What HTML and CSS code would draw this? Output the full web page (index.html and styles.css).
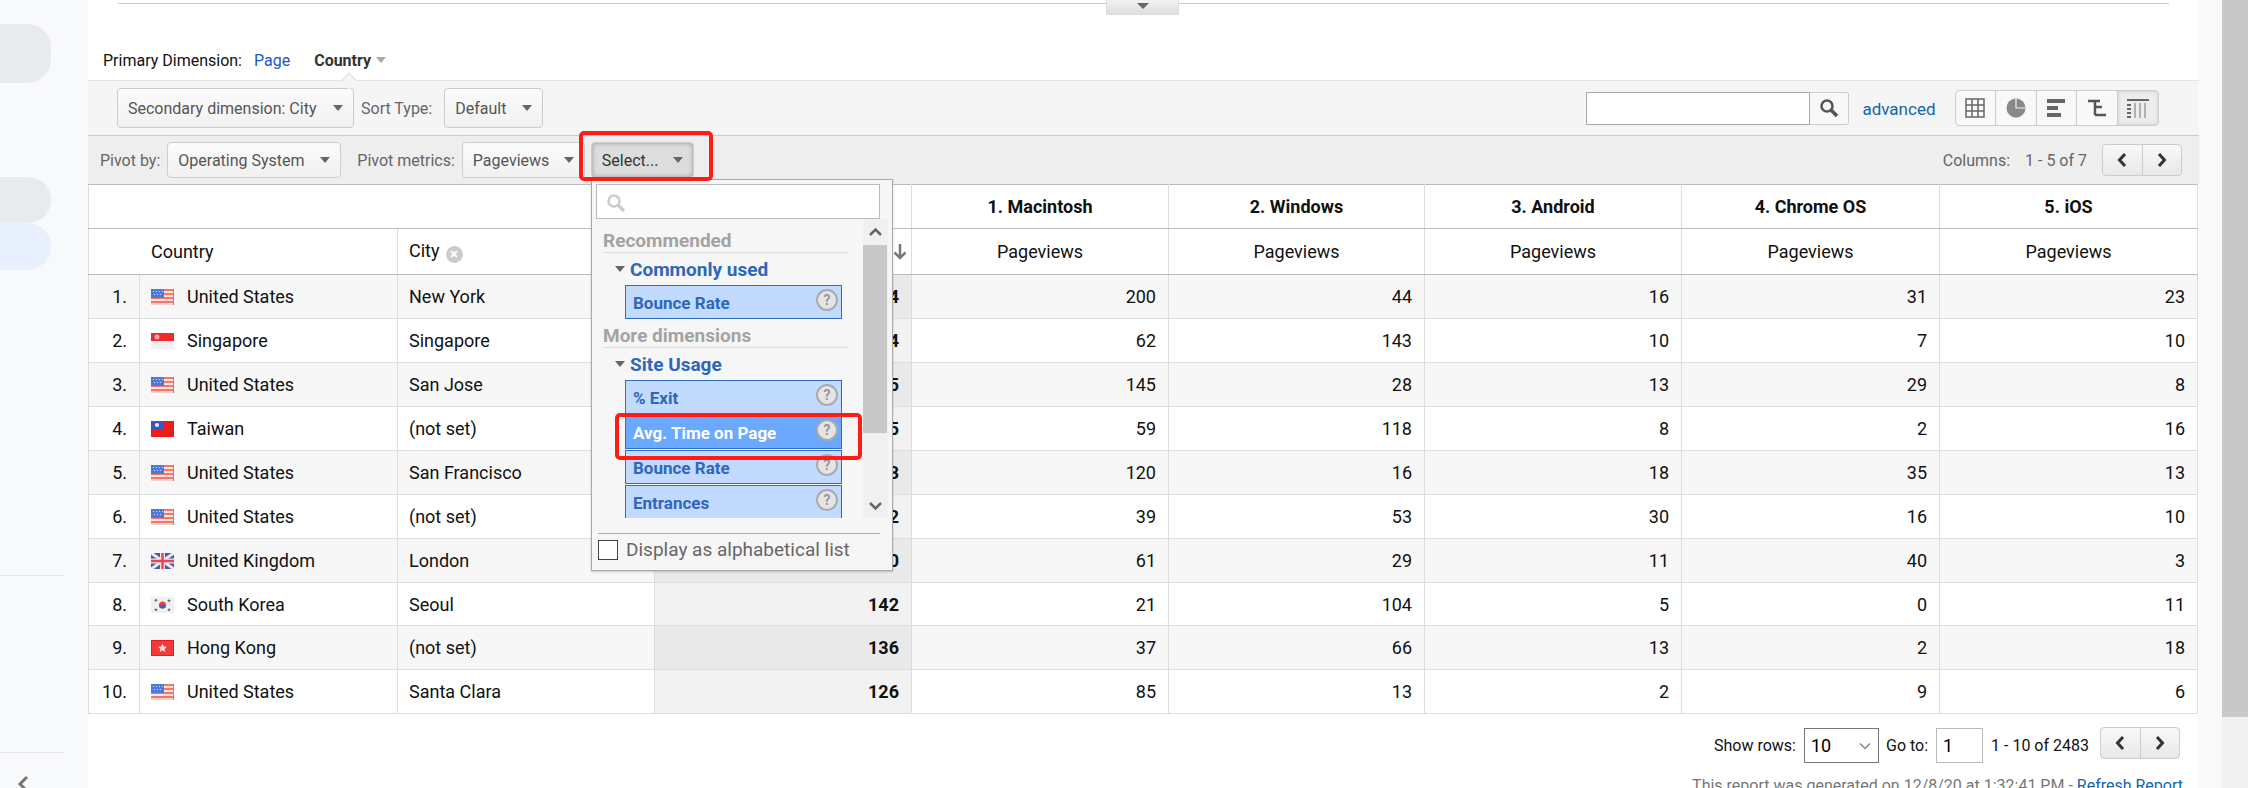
FILE: index.html
```html
<!DOCTYPE html>
<html lang="en">
<head>
  <meta charset="UTF-8" />
  <title>Pivot table report</title>
  <link rel="stylesheet" href="styles.css">
</head>
<body>
  <svg class="defs" width="0" height="0">
    <defs>
      <symbol id="flag-us" viewBox="0 0 23 16">
        <rect width="23" height="16" fill="#fbe4e0"/>
        <rect y="0" width="23" height="2" fill="#f4776c"/>
        <rect y="4" width="23" height="2" fill="#f4776c"/>
        <rect y="8" width="23" height="2" fill="#f4776c"/>
        <rect y="12" width="23" height="2" fill="#f4776c"/>
        <rect y="14" width="23" height="2" fill="#ecd3cc"/>
        <rect width="13" height="9" fill="#4b7be0"/>
        <path d="M2 2h1v1H2zM5 2h1v1H5zM8 2h1v1H8zM11 2h1v1h-1zM3 5h1v1H3zM6 5h1v1H6zM9 5h1v1H9z" fill="#cfdcff"/>
        <rect x="22" width="1" height="16" fill="#a98a80"/>
      </symbol>
      <symbol id="flag-sg" viewBox="0 0 23 16">
        <rect width="23" height="8" fill="#ee2b2b"/>
        <rect y="8" width="23" height="8" fill="#f3f1f1"/>
        <circle cx="6" cy="4" r="2.500" fill="#f9a5a5"/>
      </symbol>
      <symbol id="flag-tw" viewBox="0 0 23 16">
        <rect width="23" height="16" fill="#ee1b1b"/>
        <rect width="12" height="8" fill="#3a55c8"/>
        <circle cx="6" cy="4" r="2" fill="#eef"/>
      </symbol>
      <symbol id="flag-uk" viewBox="0 0 23 16">
        <rect width="23" height="16" fill="#3f5cb0"/>
        <path d="M0 0L23 16M23 0L0 16" stroke="#f4e4e6" stroke-width="3"/>
        <path d="M11.500 0v16M0 8h23" stroke="#f4e4e6" stroke-width="5"/>
        <path d="M11.500 0v16M0 8h23" stroke="#e8455a" stroke-width="2.500"/>
      </symbol>
      <symbol id="flag-kr" viewBox="0 0 23 16">
        <rect width="23" height="16" fill="#efefef"/>
        <circle cx="11.500" cy="8" r="3.500" fill="#e8404a"/>
        <path d="M8 8a3.500 3.500 0 0 0 7 0z" fill="#3a62c8"/>
        <path d="M4 4l2 -1.500M17 3l2 1.500M4 12l2 1.500M17 13.500l2 -1.500" stroke="#666" stroke-width="2"/>
      </symbol>
      <symbol id="flag-hk" viewBox="0 0 23 16">
        <rect width="23" height="16" fill="#e8191f"/>
        <rect x="1" y="1" width="21" height="14" fill="#f23a3a"/>
        <path d="M11.500 3.500l1.300 3 3.200.3-2.400 2.100.7 3.100-2.800-1.600-2.800 1.600.7-3.100-2.400-2.100 3.200-.3z" fill="#fbd5d5"/>
      </symbol>
      <symbol id="chev-left" viewBox="0 0 12 16">
        <path d="M9 2L3.500 8 9 14" fill="none" stroke="#333" stroke-width="3"/>
      </symbol>
      <symbol id="chev-right" viewBox="0 0 12 16">
        <path d="M3 2l5.500 6L3 14" fill="none" stroke="#333" stroke-width="3"/>
      </symbol>
    </defs>
  </svg>

  <div class="sidebar">
    <div class="pill pill-top"></div>
    <div class="pill pill-gray"></div>
    <div class="pill pill-blue"></div>
    <div class="side-line side-line-a"></div>
    <div class="side-line side-line-b"></div>
    <svg class="side-back" width="14" height="18" viewBox="0 0 14 18"><path d="M11 2L4 9l7 7" fill="none" stroke="#777" stroke-width="3"/></svg>
  </div>

  <div class="main">
    <div class="top-rule"><div class="drag-handle"><span class="caret"></span></div></div>

    <div class="primary-dim">
      <span class="pd-label">Primary Dimension:</span>
      <a class="pd-link">Page</a>
      <span class="pd-active">Country</span>
      <span class="caret caret-light"></span>
    </div>

    <div class="toolbar">
      <span class="notch"></span>
      <button class="btn btn-secondary">Secondary dimension: City<span class="caret"></span></button>
      <span class="tool-label">Sort Type:</span>
      <button class="btn btn-sort">Default<span class="caret"></span></button>
      <div class="tool-right">
        <div class="search-box">
          <input type="text" />
          <button>
            <svg width="20" height="20" viewBox="0 0 20 20"><circle cx="8" cy="8" r="5.500" fill="none" stroke="#555" stroke-width="2.500"/><path d="M12 12l6 6" stroke="#555" stroke-width="3.500"/></svg>
          </button>
        </div>
        <a class="advanced">advanced</a>
        <div class="view-btns">
          <span class="view-btn">
            <svg width="20" height="20" viewBox="0 0 20 20"><path d="M1 1h18v18H1zM7 1v18M13 1v18M1 7h18M1 13h18" fill="none" stroke="#666" stroke-width="1.500"/></svg>
          </span>
          <span class="view-btn">
            <svg width="20" height="20" viewBox="0 0 20 20"><circle cx="10" cy="10" r="9.500" fill="#888"/><path d="M10 1v9h9" fill="none" stroke="#eee" stroke-width="1.200"/></svg>
          </span>
          <span class="view-btn">
            <svg width="20" height="20" viewBox="0 0 20 20"><path d="M1 1h18v4H1zM1 8h11v4H1zM1 15h14v4H1z" fill="#666"/></svg>
          </span>
          <span class="view-btn">
            <svg width="20" height="20" viewBox="0 0 20 20"><path d="M1 3h12M8 3v14M8 9h7M8 17h11" fill="none" stroke="#555" stroke-width="2.500"/></svg>
          </span>
          <span class="view-btn view-btn-on">
            <svg width="24" height="20" viewBox="0 0 24 20"><path d="M1 1h22v2H1zM1 6h4v2H1zM1 10h4v2H1zM1 14h4v2H1zM1 18h4v2H1z" fill="#666"/><path d="M9 5v15M14 5v15M19 5v15" stroke="#888" stroke-width="1.200"/></svg>
          </span>
        </div>
      </div>
    </div>

    <div class="pivotbar">
      <span class="tool-label">Pivot by:</span>
      <button class="btn btn-pivot">Operating System<span class="caret"></span></button>
      <span class="tool-label metrics-label">Pivot metrics:</span>
      <button class="btn btn-metric">Pageviews<span class="caret"></span></button>
      <button class="btn btn-select">Select...<span class="caret"></span></button>
      <div class="pivot-right">
        <span class="columns-label">Columns:</span>
        <span class="columns-range">1 - 5 of 7</span>
        <div class="nav-btns nav-btns-top">
          <span class="nav-btn"><svg width="12" height="16"><use href="#chev-left"/></svg></span>
          <span class="nav-btn"><svg width="12" height="16"><use href="#chev-right"/></svg></span>
        </div>
      </div>
    </div>

    <table class="report">
      <colgroup>
        <col class="c-idx"><col class="c-wide"><col class="c-mid"><col class="c-mid">
        <col class="c-mid"><col class="c-narrow"><col class="c-mid"><col class="c-wide"><col class="c-wide">
      </colgroup>
      <thead>
        <tr class="head-a">
          <th colspan="4"></th>
          <th>1. Macintosh</th>
          <th>2. Windows</th>
          <th>3. Android</th>
          <th>4. Chrome OS</th>
          <th>5. iOS</th>
        </tr>
        <tr class="head-b">
          <td colspan="2" class="country-head">Country</td>
          <td class="city-head">City<span class="remove-dim">×</span></td>
          <td class="sorted-head">Pageviews<svg class="sort-arrow" width="14" height="16" viewBox="0 0 14 16"><path d="M7 0v14M1.500 8.500L7 14l5.500-5.500" fill="none" stroke="#777" stroke-width="2.500"/></svg></td>
          <td>Pageviews</td>
          <td>Pageviews</td>
          <td>Pageviews</td>
          <td>Pageviews</td>
          <td>Pageviews</td>
        </tr>
      </thead>
      <tbody>
        <tr>
          <td class="idx">1.</td>
          <td class="country"><svg class="flag"><use href="#flag-us"/></svg>United States</td>
          <td class="city">New York</td>
          <td class="total">314</td>
          <td>200</td><td>44</td><td>16</td><td>31</td><td>23</td>
        </tr>
        <tr>
          <td class="idx">2.</td>
          <td class="country"><svg class="flag"><use href="#flag-sg"/></svg>Singapore</td>
          <td class="city">Singapore</td>
          <td class="total">234</td>
          <td>62</td><td>143</td><td>10</td><td>7</td><td>10</td>
        </tr>
        <tr>
          <td class="idx">3.</td>
          <td class="country"><svg class="flag"><use href="#flag-us"/></svg>United States</td>
          <td class="city">San Jose</td>
          <td class="total">225</td>
          <td>145</td><td>28</td><td>13</td><td>29</td><td>8</td>
        </tr>
        <tr>
          <td class="idx">4.</td>
          <td class="country"><svg class="flag"><use href="#flag-tw"/></svg>Taiwan</td>
          <td class="city">(not set)</td>
          <td class="total">205</td>
          <td>59</td><td>118</td><td>8</td><td>2</td><td>16</td>
        </tr>
        <tr>
          <td class="idx">5.</td>
          <td class="country"><svg class="flag"><use href="#flag-us"/></svg>United States</td>
          <td class="city">San Francisco</td>
          <td class="total">203</td>
          <td>120</td><td>16</td><td>18</td><td>35</td><td>13</td>
        </tr>
        <tr>
          <td class="idx">6.</td>
          <td class="country"><svg class="flag"><use href="#flag-us"/></svg>United States</td>
          <td class="city">(not set)</td>
          <td class="total">152</td>
          <td>39</td><td>53</td><td>30</td><td>16</td><td>10</td>
        </tr>
        <tr>
          <td class="idx">7.</td>
          <td class="country"><svg class="flag"><use href="#flag-uk"/></svg>United Kingdom</td>
          <td class="city">London</td>
          <td class="total">150</td>
          <td>61</td><td>29</td><td>11</td><td>40</td><td>3</td>
        </tr>
        <tr>
          <td class="idx">8.</td>
          <td class="country"><svg class="flag"><use href="#flag-kr"/></svg>South Korea</td>
          <td class="city">Seoul</td>
          <td class="total">142</td>
          <td>21</td><td>104</td><td>5</td><td>0</td><td>11</td>
        </tr>
        <tr>
          <td class="idx">9.</td>
          <td class="country"><svg class="flag"><use href="#flag-hk"/></svg>Hong Kong</td>
          <td class="city">(not set)</td>
          <td class="total">136</td>
          <td>37</td><td>66</td><td>13</td><td>2</td><td>18</td>
        </tr>
        <tr>
          <td class="idx">10.</td>
          <td class="country"><svg class="flag"><use href="#flag-us"/></svg>United States</td>
          <td class="city">Santa Clara</td>
          <td class="total">126</td>
          <td>85</td><td>13</td><td>2</td><td>9</td><td>6</td>
        </tr>
      </tbody>
    </table>

    <div class="pager">
      <span>Show rows:</span>
      <div class="rows-wrap">
        <select class="rows-select"><option>10</option></select>
        <svg class="rows-chevron" width="12" height="8" viewBox="0 0 12 8"><path d="M1 1.500l5 5 5-5" fill="none" stroke="#777" stroke-width="1.200"/></svg>
      </div>
      <span>Go to:</span>
      <input class="goto" type="text" value="1" />
      <span class="pager-range">1 - 10 of 2483</span>
      <div class="nav-btns nav-btns-pager">
        <span class="nav-btn"><svg width="12" height="16"><use href="#chev-left"/></svg></span>
        <span class="nav-btn"><svg width="12" height="16"><use href="#chev-right"/></svg></span>
      </div>
    </div>
    <div class="generated">This report was generated on 12/8/20 at 1:32:41 PM - <a>Refresh Report</a></div>

    <!-- menu aberto do botao Select -->
    <div class="metric-menu">
      <div class="menu-search">
        <svg width="20" height="20" viewBox="0 0 20 20"><circle cx="8" cy="8" r="5.500" fill="none" stroke="#ccc" stroke-width="2.500"/><path d="M12 12l6 6" stroke="#ccc" stroke-width="3.500"/></svg>
      </div>
      <div class="menu-body">
        <div class="menu-list">
          <div class="menu-heading first">Recommended</div>
          <div class="menu-group"><span class="group-caret"></span>Commonly used</div>
          <div class="menu-item">Bounce Rate<span class="help">?</span></div>
          <div class="menu-heading">More dimensions</div>
          <div class="menu-group"><span class="group-caret"></span>Site Usage</div>
          <div class="menu-item">% Exit<span class="help">?</span></div>
          <div class="menu-item hover">Avg. Time on Page<span class="help">?</span></div>
          <div class="menu-item">Bounce Rate<span class="help">?</span></div>
          <div class="menu-item">Entrances<span class="help">?</span></div>
        </div>
        <div class="menu-scroll">
          <svg class="scroll-arrow" width="25" height="26" viewBox="0 0 25 26"><path d="M7 16l5.500-5.500L18 16" fill="none" stroke="#666" stroke-width="2.500"/></svg>
          <div class="scroll-thumb"></div>
          <svg class="scroll-arrow scroll-down" width="25" height="26" viewBox="0 0 25 26"><path d="M7 11l5.500 5.500L18 11" fill="none" stroke="#666" stroke-width="2.500"/></svg>
        </div>
      </div>
      <label class="menu-foot"><span class="check"></span>Display as alphabetical list</label>
    </div>

    <!-- marcacoes vermelhas -->
    <div class="mark mark-select"></div>
    <div class="mark mark-item"></div>
  </div>

  <div class="gutter"></div>
  <div class="scrollbar"><div class="scrollbar-thumb"></div></div>
</body>
</html>
```

FILE: styles.css
```css
* {
  box-sizing: border-box;
}

html, body {
  margin: 0;
  height: 788px;
  overflow: hidden;
}

body {
  display: flex;
  font-family: Roboto, sans-serif;
  font-size: 18px;
  color: #111;
  background: #f8f9fb;
}

.defs {
  position: absolute;
}

a {
  text-decoration: none;
}

/* sidebar */
.sidebar {
  position: relative;
  width: 88px;
  flex: none;
}

.pill {
  width: 51px;
  border-radius: 0 24px 24px 0;
  background: #e8eaed;
}

.pill-top {
  height: 59px;
  margin-top: 24px;
}

.pill-gray {
  height: 46px;
  margin-top: 94px;
}

.pill-blue {
  height: 47px;
  background: #e8f0fe;
}

.side-line {
  position: absolute;
  left: 0;
  width: 63px;
  height: 1px;
  background: #e6e6e8;
}

.side-line-a { top: 575px; }
.side-line-b { top: 752px; }

.side-back {
  position: absolute;
  left: 16px;
  top: 775px;
}

/* area principal */
.main {
  position: relative;
  width: 2111px;
  flex: none;
  height: 788px;
  overflow: hidden;
  background: white;
}

.top-rule {
  position: relative;
  height: 1px;
  margin: 3px 30px 0 30px;
  background: #ccc;
}

.drag-handle {
  position: absolute;
  left: 988px;
  top: -3px;
  width: 73px;
  height: 15px;
  display: flex;
  justify-content: center;
  padding-top: 3px;
  background: linear-gradient(#f2f2f2, #dedede);
  border: 1px solid #ddd;
  border-top: none;
}

.caret {
  display: inline-block;
  width: 0;
  height: 0;
  border-left: 6px solid transparent;
  border-right: 6px solid transparent;
  border-top: 6px solid #666;
}

.caret-light {
  border-left-width: 5px;
  border-right-width: 5px;
  border-top-color: #aaa;
  margin-left: 5px;
}

.primary-dim {
  height: 76px;
  padding-left: 15px;
  padding-top: 36px;
  display: flex;
  align-items: center;
  font-size: 16px;
}

.pd-link {
  color: #1a56c4;
  margin-left: 12px;
}

.pd-active {
  font-weight: bold;
  margin-left: 24px;
  color: #333;
}

.toolbar, .pivotbar {
  position: relative;
  display: flex;
  align-items: center;
  font-size: 16px;
}

.toolbar {
  height: 55px;
  padding-left: 29px;
  padding-right: 40px;
  background: #f5f5f5;
  border-top: 1px solid #e4e4e4;
}

.notch {
  position: absolute;
  left: 255px;
  top: -6px;
  width: 12px;
  height: 12px;
  background: #f5f5f5;
  border-top: 1px solid #ddd;
  border-left: 1px solid #ddd;
  transform: rotate(45deg);
}

.pivotbar {
  height: 49px;
  padding-left: 12px;
  padding-right: 17px;
  background: #eee;
  border-top: 1px solid #ccc;
}

.tool-label {
  color: #666;
}

.btn {
  flex: none;
  display: flex;
  align-items: center;
  justify-content: space-between;
  font-family: inherit;
  font-size: 16px;
  color: #555;
  background: linear-gradient(#fbfbfb, #f1f1f1);
  border: 1px solid #ccc;
  border-radius: 4px;
  padding: 0 10px;
}

.btn .caret {
  border-left-width: 5px;
  border-right-width: 5px;
  border-top-width: 6px;
}

.btn-secondary {
  width: 237px;
  height: 40px;
  margin-right: 7px;
}

.btn-sort {
  width: 99px;
  height: 40px;
  margin-left: 12px;
}

.btn-pivot {
  width: 174px;
  height: 36px;
  margin-left: 7px;
}

.metrics-label {
  margin-left: 16px;
}

.btn-metric {
  width: 123px;
  height: 36px;
  margin-left: 7px;
}

.btn-select {
  width: 103px;
  height: 36px;
  margin-left: 6px;
  color: #333;
  background: #ddd;
  box-shadow: inset 0 0 5px #999;
}

.tool-right {
  margin-left: auto;
  display: flex;
  align-items: center;
}

.search-box {
  display: flex;
  height: 33px;
}

.search-box input {
  width: 224px;
  border: 1px solid #aaa;
  background: white;
  outline: none;
}

.search-box button {
  width: 39px;
  display: flex;
  align-items: center;
  justify-content: center;
  padding: 0;
  border: 1px solid #ccc;
  border-left: none;
  border-radius: 0 3px 3px 0;
  background: #f8f8f8;
}

.advanced {
  margin-left: 13px;
  margin-top: 2px;
  font-size: 17px;
  color: #1266a8;
}

.view-btns {
  display: flex;
  height: 36px;
  margin-left: 19px;
  border: 1px solid #ccc;
  border-radius: 4px;
  background: #f8f8f8;
}

.view-btn {
  width: 40.500px;
  display: flex;
  align-items: center;
  justify-content: center;
  border-right: 1px solid #ccc;
}

.view-btn-on {
  border-right: none;
  background: #ededed;
  box-shadow: inset 0 0 4px #ccc;
}

.pivot-right {
  margin-left: auto;
  display: flex;
  align-items: center;
  color: #666;
}

.columns-range {
  margin-left: 15px;
}

.nav-btns {
  display: flex;
  width: 80px;
  height: 32px;
  border: 1px solid #ccc;
  border-radius: 4px;
  background: linear-gradient(#f8f8f8, #e8e8e8);
}

.nav-btns-top {
  margin-left: 15px;
}

.nav-btns-pager {
  margin-top: -4px;
}

.nav-btn {
  flex: 1;
  display: flex;
  align-items: center;
  justify-content: center;
}

.nav-btn:first-child {
  border-right: 1px solid #ccc;
}

/* tabela */
.report {
  width: 2109px;
  table-layout: fixed;
  border-collapse: collapse;
  font-size: 18px;
}

.c-idx { width: 51px; }
.c-wide { width: 258px; }
.c-mid { width: 257px; }
.c-narrow { width: 256px; }

.report td, .report th {
  border: 1px solid #ddd;
  padding: 0 12px;
  white-space: nowrap;
}

.report tbody tr {
  height: 44px;
}

.report tbody tr:nth-child(8) {
  height: 43px;
}

.report tbody td {
  text-align: right;
}

.report tbody tr:nth-child(odd) {
  background: #f7f7f7;
}

.report thead tr {
  background: white;
}

.head-a {
  height: 44px;
}

.head-a th {
  border-top-color: #bbb;
  border-bottom-color: #bbb;
  font-weight: bold;
  text-align: center;
}

.head-b {
  height: 46px;
}

.head-b td {
  border-bottom-color: #bbb;
  text-align: center;
}

.report .country-head, .report .city-head {
  text-align: left;
}

.report .country-head {
  padding-left: 62px;
}

.report .city-head {
  padding-left: 11px;
}

.remove-dim {
  display: inline-block;
  width: 17px;
  height: 17px;
  margin-left: 6px;
  border-radius: 50%;
  background: #ccc;
  color: white;
  font-size: 15px;
  line-height: 16px;
  text-align: center;
  font-weight: bold;
  vertical-align: -2px;
}

.report .sorted-head {
  text-align: right;
  padding-right: 4px;
}

.sort-arrow {
  margin-left: 6px;
  vertical-align: -2px;
}

.report tbody .country, .report tbody .city {
  text-align: left;
}

.report tbody .country {
  padding-left: 11px;
}

.report tbody .city {
  padding-left: 11px;
}

.report tbody .total {
  font-weight: bold;
  background: #f2f2f2;
}

.report tbody tr:nth-child(odd) .total {
  background: #e9e9e9;
}

.flag {
  width: 23px;
  height: 16px;
  margin-right: 13px;
  vertical-align: -2px;
}

/* rodape */
.pager {
  display: flex;
  align-items: center;
  justify-content: flex-end;
  height: 36px;
  margin-top: 13px;
  padding-right: 19px;
  font-size: 16px;
}

.rows-wrap {
  position: relative;
  width: 75px;
  height: 35px;
  margin-left: 8px;
  margin-right: 7px;
}

.rows-select {
  appearance: none;
  width: 75px;
  height: 35px;
  padding-left: 6px;
  font-family: inherit;
  font-size: 18px;
  border: 1px solid #777;
  border-radius: 0;
  background: white;
}

.rows-chevron {
  position: absolute;
  right: 8px;
  top: 14px;
}

.goto {
  width: 47px;
  height: 35px;
  margin-left: 8px;
  margin-right: 8px;
  padding-left: 6px;
  font-family: inherit;
  font-size: 18px;
  border: 1px solid #bbb;
  outline: none;
}

.pager-range {
  margin-right: 11px;
}

.generated {
  margin-top: 13px;
  padding-right: 16px;
  text-align: right;
  font-size: 16px;
  color: #777;
}

.generated a {
  color: #1266a8;
}

/* menu Select */
.metric-menu {
  position: absolute;
  left: 503px;
  top: 179px;
  width: 302px;
  height: 392px;
  padding: 4px 4px 0;
  background: #f6f6f6;
  border: 1px solid #aaa;
  box-shadow: 0 1px 2px rgba(0,0,0,0.2);
}

.menu-search {
  width: 284px;
  height: 35px;
  padding: 8px 0 0 9px;
  background: white;
  border: 1px solid #bbb;
}

.menu-body {
  display: flex;
  height: 299px;
}

.menu-list {
  width: 268px;
  height: 299px;
  overflow: hidden;
}

.menu-heading {
  width: 245px;
  height: 24px;
  margin-left: 7px;
  margin-top: 5px;
  line-height: 24px;
  font-size: 19px;
  font-weight: bold;
  color: #a3a3a3;
  border-bottom: 1px solid #ddd;
}

.menu-heading.first {
  margin-top: 10px;
}

.menu-group {
  display: flex;
  align-items: center;
  height: 32px;
  padding-left: 19px;
  font-size: 19px;
  font-weight: bold;
  color: #2e67b8;
}

.group-caret {
  width: 0;
  height: 0;
  margin-right: 5px;
  border-left: 5px solid transparent;
  border-right: 5px solid transparent;
  border-top: 6px solid #666;
}

.menu-item {
  position: relative;
  width: 217px;
  height: 34px;
  margin-left: 29px;
  margin-bottom: 1px;
  padding-left: 7px;
  line-height: 34px;
  font-size: 17px;
  font-weight: bold;
  color: #2e67b8;
  background: #c3daff;
  border: 1px solid #2f6dc0;
}

.menu-item.hover {
  color: white;
  background: #6aa9ff;
}

.help {
  position: absolute;
  right: 3px;
  top: 3px;
  width: 22px;
  height: 22px;
  border-radius: 50%;
  border: 2px solid #aaa;
  background: #e4e4e4;
  color: #999;
  font-size: 14px;
  line-height: 18px;
  text-align: center;
}

.menu-scroll {
  position: relative;
  width: 25px;
  background: #f0f0f0;
}

.scroll-arrow {
  display: block;
}

.scroll-down {
  position: absolute;
  left: 0;
  bottom: 0;
}

.scroll-thumb {
  width: 24px;
  height: 188px;
  background: #c8c8c8;
}

.menu-foot {
  display: flex;
  align-items: center;
  margin: 15px 8px 0 2px;
  padding-top: 4px;
  font-size: 19px;
  color: #666;
  border-top: 1px solid #aaa;
}

.check {
  width: 20px;
  height: 20px;
  margin-right: 8px;
  background: white;
  border: 1px solid #444;
}

/* marcacoes */
.mark {
  position: absolute;
  border: 4px solid #ff1c14;
  border-radius: 5px;
  pointer-events: none;
}

.mark-select {
  left: 491px;
  top: 131px;
  width: 134px;
  height: 50px;
}

.mark-item {
  left: 527px;
  top: 413px;
  width: 247px;
  height: 47px;
}

/* lateral direita */
.gutter {
  width: 23px;
  flex: none;
}

.scrollbar {
  width: 26px;
  flex: none;
  background: #f1f1f1;
}

.scrollbar-thumb {
  height: 717px;
  background: #c8c8c8;
}
```
